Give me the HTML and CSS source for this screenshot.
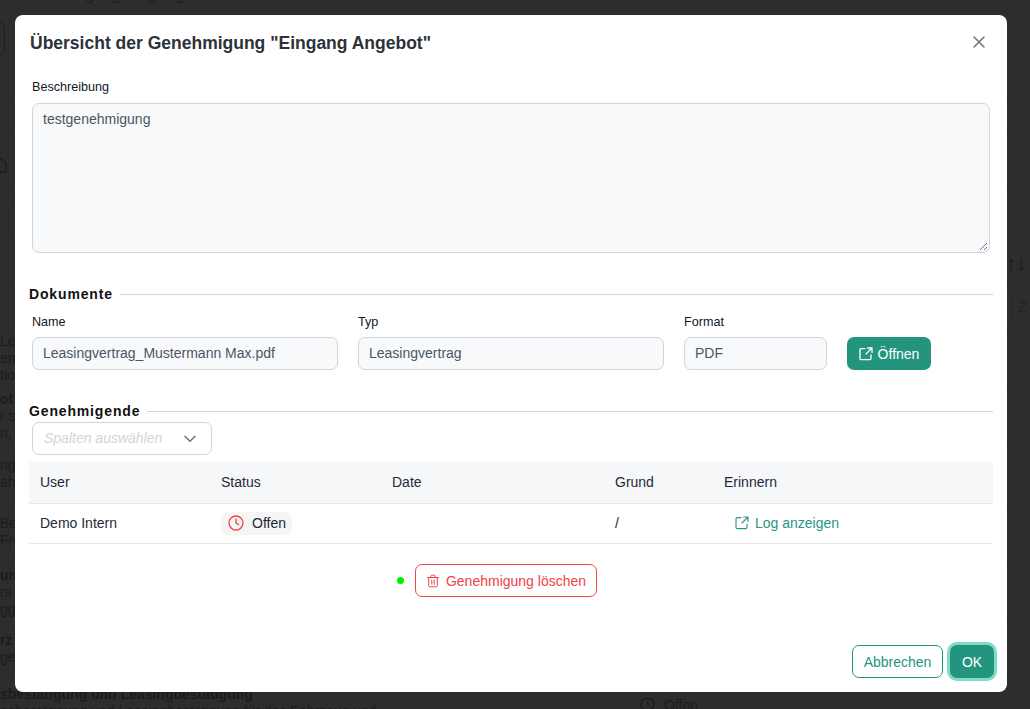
FILE: index.html
```html
<!DOCTYPE html>
<html lang="de">
<head>
<meta charset="utf-8">
<title>Genehmigung</title>
<link rel="stylesheet" href="styles.css">
</head>
<body>
<div class="page">
  <div class="bg-row bg-r1"><span class="bg-head">Genehmigung Eingang</span><div class="bg-box"></div></div>
  <div class="bg-row bg-r2"></div>
  <div class="bg-row bg-r3"><svg class="bg-doc" viewBox="0 0 16 16" fill="none" stroke="#1c1c1c" stroke-width="1.3"><path d="M-6 1h14l6 5v9H-6z"/></svg></div>
  <div class="bg-row bg-r4"><div class="bg-input"></div><span class="bg-sort">↑↓</span></div>
  <div class="bg-row bg-r5"><div class="bg-zbox">Z</div></div>
  <div class="bg-row"><p class="bg-text">Lea<br>enz<br>tio</p></div>
  <div class="bg-row"><p class="bg-text"><b>ot</b><br>r s<br>n,</p></div>
  <div class="bg-row bg-pad"><p class="bg-text">nge<br>ah</p></div>
  <div class="bg-row bg-pad"><p class="bg-text">Be<br>Fre</p></div>
  <div class="bg-row"><p class="bg-text"><b>un</b><br>rs<br>gge</p></div>
  <div class="bg-row bg-pad"><p class="bg-text"><b>rz</b><br>ge</p></div>
  <div class="bg-row bg-last"><p class="bg-text"><b>sbestätigung und Leasingbestätigung</b><br>gsbestätigung und Leasingbestätigung für das Fahrzeug und</p>
    <span class="bg-status"><svg viewBox="0 0 24 24" fill="none" stroke="#1c1c1c" stroke-width="2"><circle cx="12" cy="12" r="9"/><path d="M12 7v5l3 2"/></svg>Offen</span></div>
</div>

<div class="overlay">
  <section class="modal">
    <header class="modal-head">
      <h1 class="modal-title">Übersicht der Genehmigung "Eingang Angebot"</h1>
      <svg class="close" viewBox="0 0 12 12" fill="none" stroke="#6b7280" stroke-width="1.5" stroke-linecap="round"><path d="M1 1l10 10M11 1L1 11"/></svg>
    </header>

    <div class="field desc">
      <label class="label">Beschreibung</label>
      <div class="control area">testgenehmigung
        <svg class="grip" viewBox="0 0 10 10" fill="none" stroke="#6b7280" stroke-width="1"><path d="M9 2L2 9M9 6L6 9"/></svg>
      </div>
    </div>

    <div class="divider docs-div"><span>Dokumente</span></div>
    <div class="doc-row">
      <div class="field f-name"><label class="label">Name</label><div class="control">Leasingvertrag_Mustermann Max.pdf</div></div>
      <div class="field f-type"><label class="label">Typ</label><div class="control">Leasingvertrag</div></div>
      <div class="field f-format"><label class="label">Format</label><div class="control">PDF</div></div>
      <button class="btn btn-primary open">
        <svg class="ext" viewBox="0 0 14 14" fill="none" stroke="currentColor" stroke-width="1.3" stroke-linecap="round" stroke-linejoin="round"><path d="M6 1.6H2.2a1.2 1.2 0 0 0-1.2 1.2v8.6c0 .7.5 1.2 1.2 1.2h8.6c.7 0 1.2-.5 1.2-1.2V8"/><path d="M8.6 1H13v4.4M13 1L7 7"/></svg>
        Öffnen
      </button>
    </div>

    <div class="divider appr-div"><span>Genehmigende</span></div>
    <div class="select">
      <span class="placeholder">Spalten auswählen</span>
      <svg class="chev" viewBox="0 0 12 8" fill="none" stroke="#6b7280" stroke-width="1.5" stroke-linecap="round" stroke-linejoin="round"><path d="M1 1.2l5 5 5-5"/></svg>
    </div>

    <div class="table">
      <div class="tr th"><span>User</span><span>Status</span><span>Date</span><span>Grund</span><span>Erinnern</span></div>
      <div class="tr td">
        <span>Demo Intern</span>
        <span><span class="pill"><svg class="clock" viewBox="0 0 16 16" fill="none" stroke="#ef4444" stroke-width="1.3" stroke-linecap="round" stroke-linejoin="round"><circle cx="8" cy="8" r="7"/><path d="M8 4v4l2.6 1.6"/></svg>Offen</span></span>
        <span></span>
        <span>/</span>
        <span class="log"><svg class="ext" viewBox="0 0 14 14" fill="none" stroke="currentColor" stroke-width="1.1" stroke-linecap="round" stroke-linejoin="round"><path d="M6 1.6H2.2a1.2 1.2 0 0 0-1.2 1.2v8.6c0 .7.5 1.2 1.2 1.2h8.6c.7 0 1.2-.5 1.2-1.2V8"/><path d="M8.6 1H13v4.4M13 1L7 7"/></svg>Log anzeigen</span>
      </div>
    </div>

    <div class="delete-row">
      <span class="dot"></span>
      <button class="btn btn-danger">
        <svg class="trash" viewBox="0 0 14 14" fill="none" stroke="currentColor" stroke-width="1" stroke-linecap="round" stroke-linejoin="round"><path d="M1.5 3.5h11M4.8 3.5V2.2c0-.6.4-1 1-1h2.4c.6 0 1 .4 1 1v1.3M2.7 3.5v8.3c0 .6.5 1 1 1h6.6c.5 0 1-.4 1-1V3.5M5.8 6.2v4M8.2 6.2v4"/></svg>
        Genehmigung löschen
      </button>
    </div>

    <footer class="modal-foot">
      <button class="btn btn-outline">Abbrechen</button>
      <button class="btn btn-primary ok">OK</button>
    </footer>
  </section>
</div>
</body>
</html>
```

FILE: styles.css
```css
* { box-sizing: border-box; }
html, body { margin: 0; height: 100%; overflow: hidden; }
body {
  background: #2d2d2d;
  font-family: "Liberation Sans", Arial, sans-serif;
  font-size: 14px;
  color: #1c1c1c;
}

/* dimmed page behind the dialog */
.page { height: 709px; overflow: hidden; }
.bg-row {
  height: 58.4px;
  border-bottom: 1px solid #292929;
  display: flex;
  position: relative;
}
.bg-r1 { height: 100px; display: block; overflow: hidden; }
.bg-r2 { height: 32px; }
.bg-r3 { height: 56px; }
.bg-r4 { height: 97px; }
.bg-r5 { height: 45px; justify-content: flex-end; padding: 7px 0 0; }
.bg-pad { padding-top: 7px; }
.bg-last { border: 0; height: auto; padding-top: 3px; }
.bg-head {
  display: block;
  margin: -14px 0 0 20px;
  font-size: 16px;
  line-height: 18px;
  color: #1f1f1f;
}
.bg-box {
  width: 5px;
  height: 33px;
  margin-top: 18px;
  border: 1px solid #1f1f1f;
  border-left: 0;
  border-radius: 0 6px 6px 0;
}
.bg-doc { width: 16px; height: 18px; margin: 24px 0 0 -8px; overflow: visible; }
.bg-input {
  width: 40px;
  height: 31px;
  margin: 17px 0 0 8px;
  border: 1px solid #292929;
  border-radius: 6px;
}
.bg-sort { margin: 64px 0 0 auto; padding-right: 4px; font-size: 20px; color: #1c1c1c; }
.bg-zbox {
  width: 18px;
  height: 31px;
  border: 1px solid #292929;
  border-right: 0;
  border-radius: 6px 0 0 6px;
  padding: 6px 0 0 5px;
  color: #222;
}
.bg-text {
  margin: 3px 0 0;
  line-height: 17px;
  white-space: nowrap;
  color: #1c1c1c;
}
.bg-status {
  position: absolute;
  left: 639px;
  top: 16px;
  display: flex;
  align-items: center;
  gap: 8px;
  color: #1c1c1c;
}
.bg-status svg { width: 17px; height: 17px; }

/* dialog */
.overlay {
  position: fixed;
  inset: 0;
  padding: 15px 23px 17px 15px;
}
.modal {
  height: 677px;
  background: #fff;
  border-radius: 8px;
  padding: 0 14px 0 14px;
  color: #111827;
  display: flex;
  flex-direction: column;
}
.modal-head {
  height: 55px;
  display: flex;
  align-items: center;
  justify-content: space-between;
  padding: 0 8px 0 1px;
}
.modal-title {
  margin: 0;
  font-size: 17.5px;
  line-height: 24px;
  font-weight: 700;
  color: #2d3239;
}
.close { width: 12px; height: 12px; margin-bottom: 1px; }

.field { display: flex; flex-direction: column; }
.label {
  font-size: 12.6px;
  line-height: 15px;
  height: 15px;
  margin-bottom: 7px;
  color: #111827;
}
.control {
  height: 33px;
  background: #f8f9fb;
  border: 1px solid #d1d5db;
  border-radius: 7px;
  padding: 0 10px;
  line-height: 31px;
  color: #4b5563;
  font-size: 14px;
  white-space: nowrap;
  overflow: hidden;
}
.desc { margin: 10px 3px 0 3px; }
.desc .label { margin-bottom: 8px; }
.area {
  height: 150px;
  line-height: 31px;
  position: relative;
}
.grip { position: absolute; right: 1px; bottom: 1px; width: 10px; height: 10px; }

.divider {
  display: flex;
  align-items: center;
  gap: 7px;
  height: 16px;
  font-size: 14px;
  font-weight: 700;
  letter-spacing: 0.85px;
  color: #111;
}
.divider::after { content: ""; flex: 1; height: 1px; background: #d1d5db; }
.docs-div { margin-top: 33px; }
.appr-div { margin-top: 33px; }

.doc-row {
  display: flex;
  align-items: flex-end;
  margin: 13px 0 0 3px;
}
.f-name { width: 306px; margin-right: 20px; }
.f-type { width: 306px; margin-right: 20px; }
.f-format { width: 143px; margin-right: 20px; }

.btn {
  font-family: inherit;
  font-size: 14px;
  height: 33px;
  border-radius: 7px;
  display: inline-flex;
  align-items: center;
  justify-content: center;
  padding: 0;
  cursor: pointer;
}
.btn-primary { background: #23957f; color: #fff; border: 0; }
.open { width: 84px; gap: 5px; }
.ext { width: 14px; height: 14px; flex: none; }

.select {
  width: 180px;
  height: 33px;
  margin: 3px 0 0 3px;
  border: 1px solid #d1d5db;
  border-radius: 7px;
  display: flex;
  align-items: center;
  justify-content: space-between;
  padding: 0 15px 1px 11px;
}
.placeholder { font-style: italic; color: #d1d5db; font-size: 14px; }
.chev { width: 12px; height: 8px; margin-top: 1px; }

.table { margin-top: 7px; }
.tr {
  display: grid;
  grid-template-columns: 181px 171px 223px 109px 1fr;
  align-items: center;
  padding: 0 0 2px 11px;
  border-bottom: 1px solid #e5e7eb;
  color: #1f2937;
}
.th { height: 42px; background: #f6f7f9; }
.td { height: 40px; }
.pill {
  display: inline-flex;
  align-items: center;
  gap: 8px;
  height: 23px;
  width: 71px;
  padding-left: 7px;
  background: #f5f5f5;
  border-radius: 7px;
  margin-top: 1px;
  vertical-align: top;
}
.clock { width: 16px; height: 16px; }
.log { display: flex; align-items: center; gap: 6px; padding-left: 11px; color: #2a9584; }

.delete-row {
  display: flex;
  align-items: center;
  justify-content: center;
  gap: 11px;
  margin-top: 20px;
  padding-right: 28px;
}
.dot { width: 7px; height: 7px; border-radius: 50%; background: #00ee00; }
.btn-danger {
  width: 182px;
  background: #fff;
  border: 1px solid #ef4444;
  color: #ef4444;
  gap: 6px;
}
.trash { width: 14px; height: 14px; }

.modal-foot {
  margin-top: auto;
  margin-bottom: 14px;
  display: flex;
  justify-content: flex-end;
  gap: 7px;
}
.btn-outline {
  width: 91px;
  background: #fff;
  border: 1px solid #23957f;
  color: #23957f;
}
.ok {
  width: 44px;
  margin-right: -1px;
  box-shadow: 0 0 0 3px #7fdcc9;
}
```
